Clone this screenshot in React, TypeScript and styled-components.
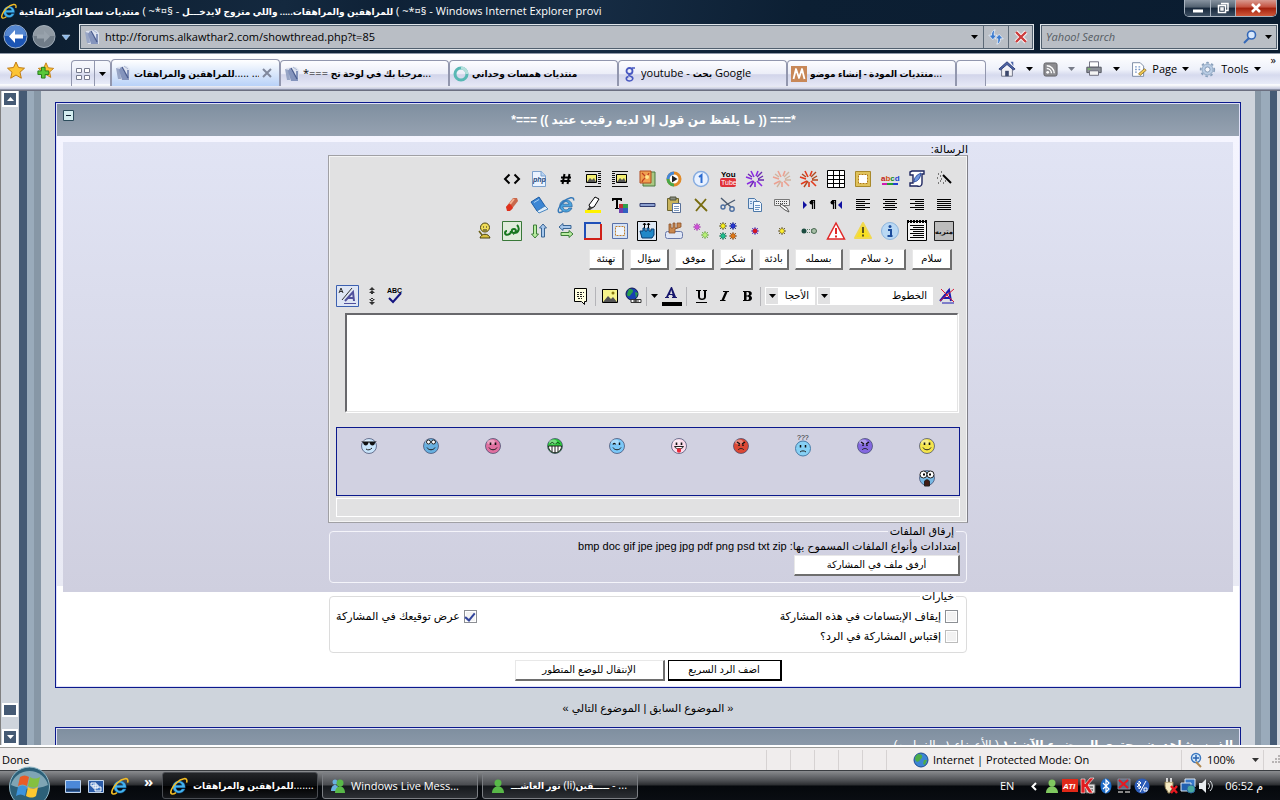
import React from 'react';
import styled, { createGlobalStyle } from 'styled-components';

const GlobalStyle = createGlobalStyle`
  * { box-sizing: border-box; }
  html, body, #root { height: 100%; }
  body { margin: 0; overflow: hidden; background: #ced4dc; }
  button, input, select, textarea { font: inherit; margin: 0; }
  button { cursor: pointer; }
  a { color: inherit; text-decoration: none; }
  svg { display: block; flex: none; direction: ltr; overflow: visible; }
`;

const uiFont = '"Open Sans", "DejaVu Sans", sans-serif';
const pageFont = '"Liberation Sans", "DejaVu Sans", sans-serif';

/* ---------- window frame ---------- */

const Window = styled.div`
  display: flex;
  flex-direction: column;
  height: 100vh;
  font: 11px/16px ${uiFont};
  color: #000;
`;

const Frame = styled.header`
  background: linear-gradient(100deg, #0b1c2e 0%, #14293f 22%, #0e2136 30%, #172d45 44%, #0c1f33 62%, #0a1c30 100%);
`;

const TitleBar = styled.div`
  display: flex;
  align-items: center;
  height: 22px;
  padding-left: 1px;
  gap: 2px;
  color: #fff;
  white-space: nowrap;
`;

const TitleText = styled.h1`
  flex: 1;
  margin: 0;
  font-size: 11px;
  line-height: 18px;
  font-weight: 400;
  overflow: hidden;
`;

const ArabicStrong = styled.bdi`
  font-weight: 700;
  font-size: 9px;
`;

const WindowButtons = styled.div`
  display: flex;
  align-self: flex-start;
  height: 17px;
  margin-right: 3px;
  border: 1px solid #a9b4c0;
  border-top: 0;
  border-radius: 0 0 5px 5px;
  overflow: hidden;
`;

const WindowButton = styled.button<{ $close?: boolean }>`
  display: grid;
  place-items: center;
  width: ${p => (p.$close ? 41 : 25)}px;
  padding: 0;
  border: 0;
  background: ${p =>
    p.$close
      ? 'linear-gradient(#d99a90, #c4503e 45%, #a11f0c 50%, #d0583a)'
      : 'linear-gradient(#8793a0, #51606f 45%, #15263a 50%, #3e5063)'};
  & + & { border-left: 1px solid #a9b4c0; }
`;

const NavBar = styled.nav`
  display: flex;
  align-items: center;
  height: 31px;
  padding: 0 2px 2px 3px;
`;

const RoundButton = styled.button`
  padding: 0;
  border: 0;
  background: none;
`;

const AddressBar = styled.form`
  display: flex;
  flex: 1;
  align-items: center;
  height: 26px;
  margin-left: 9px;
  padding-left: 4px;
  border: 1px solid #dfe5ea;
  outline: 1px solid #51606f;
  outline-offset: -2px;
  background: #b9bec5;
`;

const AddressInput = styled.input`
  flex: 1;
  min-width: 0;
  height: 22px;
  padding: 0 5px;
  border: 0;
  outline: 0;
  background: none;
`;

const BarButton = styled.button<{ $divided?: boolean }>`
  display: grid;
  place-items: center;
  align-self: stretch;
  width: ${p => (p.$divided ? 25 : 18)}px;
  padding: 0;
  border: 0;
  border-left: ${p => (p.$divided ? '1px solid #5d6a77' : '0')};
  background: none;
`;

const SearchBar = styled(AddressBar)`
  flex: 0 0 238px;
  margin-left: 6px;
  padding-left: 0;
`;

const SearchInput = styled(AddressInput)`
  font-style: italic;
  &::placeholder { color: #565c63; opacity: 1; }
`;

const TabBar = styled.div`
  display: flex;
  align-items: flex-end;
  height: 37px;
  padding: 0 4px 3px 6px;
  border-top: 1px solid #8e98a8;
  border-bottom: 1px solid #8d93a8;
  background: linear-gradient(#ffffff, #eef1fa 45%, #d6daee 60%, #e8ebf8 85%, #ffffff 88%, #c3c7dc);
`;

const Favorites = styled.div`
  display: flex;
  align-items: center;
  gap: 11px;
  width: 65px;
  height: 32px;
`;

const PlainButton = styled.button`
  display: flex;
  align-items: center;
  gap: 3px;
  padding: 0;
  border: 0;
  background: none;
`;

const QuickTabs = styled.div`
  display: flex;
  height: 26px;
  border: 1px solid #9297ae;
  border-bottom: 0;
  border-radius: 4px 4px 0 0;
  button { justify-content: center; width: 15px; }
  button:first-child { width: 23px; border-right: 1px solid #9297ae; }
`;

const Tab = styled.a<{ $active?: boolean }>`
  display: flex;
  flex: 0 1 169px;
  min-width: 0;
  align-items: center;
  gap: 3px;
  height: ${p => (p.$active ? 27 : 26)}px;
  padding: 0 7px 0 3px;
  border: 1px solid #9297ae;
  border-bottom: 0;
  border-radius: 4px 4px 0 0;
  background: ${p => (p.$active ? 'linear-gradient(#fff, #dbe8fb 50%, #b9d2f8)' : 'linear-gradient(#fdfdff, #eceef8 50%, #d2d5ea 55%, #e6e8f6)')};
  white-space: nowrap;
`;

const TabTitle = styled.span`
  flex: 1;
  min-width: 0;
  overflow: hidden;
`;

const NewTab = styled.button`
  width: 30px;
  height: 26px;
  border: 1px solid #9297ae;
  border-bottom: 0;
  border-radius: 4px 4px 0 0;
  background: linear-gradient(#fdfdff, #eceef8 50%, #d2d5ea 55%, #e6e8f6);
`;

const Commands = styled.div`
  display: flex;
  flex: 1;
  align-items: center;
  justify-content: flex-end;
  gap: 10px;
  height: 34px;
  button { gap: 5px; }
  button:nth-child(-n + 3) { gap: 10px; }
  button:last-child { align-self: flex-start; }
`;

/* ---------- page viewport ---------- */

const Viewport = styled.div`
  display: flex;
  flex: 1;
  min-height: 0;
  padding-right: 3px;
  border-top: 1px solid #6b6f80;
  border-left: 1px solid #808080;
  background: #ced4dc;
`;

const ScrollBar = styled.div`
  display: flex;
  flex-direction: column;
  width: 18px;
  padding: 0 2px 0 1px;
  background: #ced4dc;
`;

const ScrollPart = styled.button<{ $thumb?: boolean }>`
  display: grid;
  place-items: center;
  width: 16px;
  height: ${p => (p.$thumb ? 14 : 16)}px;
  padding: 0;
  border: 2px solid #fff;
  background: #455a74;
`;

const ScrollGap = styled.div<{ $fill?: boolean }>`
  flex: ${p => (p.$fill ? '1' : '0 0 12px')};
`;

const SideRail = styled.div<{ $right?: boolean }>`
  flex: 0 0 22px;
  background: ${p =>
    p.$right
      ? 'linear-gradient(90deg, #8797a6 0 6px, #9aabbb 6px 15px, #455a74 15px)'
      : 'linear-gradient(90deg, #455a74 0 8px, #9aabbb 8px 15px, #8797a6 15px)'};
`;

const Page = styled.main`
  flex: 1;
  min-width: 0;
  overflow: hidden;
  padding: 11px 14px 0;
  font: 11px/16px ${pageFont};
  direction: rtl;
`;

const Block = styled.section`
  border: 1px solid #0b198c;
  outline: 1px solid #dfe0f8;
  outline-offset: -2px;
  padding: 1px;
  background: #fff;
`;

const BlockHeader = styled.div`
  display: flex;
  align-items: center;
  height: 32px;
  padding: 0 6px;
  background: linear-gradient(#7f8fa0, #96a2b1);
  color: #fff;
`;

const BlockTitle = styled.h2`
  flex: 1;
  margin: 0;
  text-align: center;
  font-size: 12px;
  line-height: 20px;
`;

const ViewersTitle = styled.h2`
  margin: 0;
  font-size: 12px;
  line-height: 20px;
  span { font-weight: 400; }
`;

const Collapse = styled.button`
  align-self: flex-start;
  margin-top: 6px;
  padding: 0;
  border: 0;
  background: none;
`;

const Panel = styled.div`
  padding: 6px 6px 0;
  background: linear-gradient(#f5f5ff, #e9eaf4) top / 100% 450px no-repeat #fff;
`;

const PanelBody = styled.form`
  background: linear-gradient(#e1e4f4, #cfcfdf) top / 100% 450px no-repeat #fff;
  padding-bottom: 5px;
`;

const Column = styled.div`
  width: 640px;
  max-width: 100%;
  margin: 0 auto;
`;

const FieldLabel = styled.label`
  display: block;
  height: 13px;
  line-height: 15px;
`;

const Editor = styled.div`
  padding: 10px 7px 5px;
  border: 1px solid #a0a0a4;
  border-right-color: #808088;
  outline: 1px solid #f4f4f4;
  outline-offset: -2px;
  background: #e1e1e2;
`;

const IconRow = styled.div`
  display: flex;
  height: 26px;
  padding-right: 3px;
`;

const ToolButton = styled.button<{ $width?: number }>`
  display: grid;
  place-items: center;
  flex: 0 0 ${p => p.$width ?? 27}px;
  height: 26px;
  padding: 0;
  border: 0;
  background: none;
`;

const PhraseRow = styled.div`
  display: flex;
  gap: 6px;
  padding: 5px 8px 0;
`;

const RaisedButton = styled.button<{ $width: number; $primary?: boolean }>`
  width: ${p => p.$width}px;
  height: 21px;
  padding: 0;
  border: ${p => (p.$primary ? '1px solid #000' : '1px solid #e8e8e8')};
  border-right: 2px solid ${p => (p.$primary ? '#000' : '#6e6e6e')};
  border-bottom: 2px solid ${p => (p.$primary ? '#000' : '#6e6e6e')};
  background: #fff;
  color: #000;
  font-size: 10px;
  line-height: 16px;
  white-space: nowrap;
`;

const Toolbar = styled.div`
  display: flex;
  align-items: center;
  height: 26px;
  margin-top: 13px;
`;

const Spacer = styled.div`
  flex: 1;
`;

const Divider = styled.div`
  width: 1px;
  height: 19px;
  margin: 0 2px;
  background: #b4b4b8;
`;

const SelectBox = styled.label<{ $width: number }>`
  display: grid;
  grid-template-columns: 1fr 12px;
  align-items: center;
  justify-items: center;
  width: ${p => p.$width}px;
  height: 18px;
  margin-left: 2px;
  border: 1px solid #fff;
  background: #e1e1e2;
  select {
    grid-area: 1 / 1 / 2 / 3;
    width: 100%;
    height: 16px;
    padding: 0 5px 0 12px;
    border: 0;
    appearance: none;
    background: linear-gradient(#fff, #fff) right / calc(100% - 12px) 100% no-repeat transparent;
    font-size: 10px;
    line-height: 16px;
  }
  svg { grid-area: 1 / 2; pointer-events: none; }
`;

const Message = styled.textarea`
  display: block;
  width: calc(100% - 11px);
  height: 99px;
  margin: 4px 2px 0 9px;
  border: 1px solid #e4e4e4;
  border-top: 2px solid #68686c;
  border-left: 2px solid #68686c;
  background: #fff;
  box-shadow: 1px 1px #fff;
  outline: 0;
  resize: none;
`;

const Smilies = styled.div`
  display: grid;
  grid-template-columns: repeat(10, 62px);
  grid-auto-rows: 32px;
  justify-content: start;
  margin-top: 15px;
  padding: 2px 1px 1px;
  border: 1px solid #0b198c;
  background: #d1d1e1;
`;

const SmileyButton = styled.button`
  display: grid;
  place-items: center;
  padding: 0;
  border: 0;
  background: none;
`;

const Strip = styled.div`
  height: 19px;
  margin-top: 2px;
  border: 1px solid #fff;
`;

const Group = styled.fieldset<{ $light?: boolean }>`
  min-width: 0;
  margin: ${p => (p.$light ? 7 : 2)}px 1px 0;
  padding: 0 6px 6px;
  border: 1px solid ${p => (p.$light ? '#dcdcdc' : '#f4f4fa')};
  border-radius: 4px;
  legend { padding: 0 2px; margin-right: 4px; line-height: 13px; }
  p { margin: 0 0 1px; line-height: 16px; }
`;

const Options = styled.div`
  display: grid;
  grid-template-columns: 1fr auto;
  padding: 3px 2px 0 0;
`;

const Option = styled.label`
  display: flex;
  align-items: center;
  gap: 4px;
  height: 20px;
  input {
    appearance: none;
    display: grid;
    place-items: center;
    width: 13px;
    height: 13px;
    border: 1px solid #8c8f94;
    background: #f2f2f2;
    outline: 1px solid #fff;
    outline-offset: -2px;
  }
  input:disabled { border-color: #bcbcbc; }
  input:checked::after {
    content: '';
    width: 4px;
    height: 8px;
    border: solid #31449c;
    border-width: 0 2px 2px 0;
    transform: rotate(40deg);
  }
`;

const Actions = styled.div`
  display: flex;
  justify-content: center;
  gap: 3px;
  padding-top: 7px;
`;

const ThreadNav = styled.p`
  margin: 0;
  padding: 12px 0 11px;
  text-align: center;
`;

/* ---------- status bar and taskbar ---------- */

const StatusBar = styled.footer`
  display: flex;
  align-items: center;
  height: 25px;
  border-top: 2px solid #fff;
  background: #f0eded;
  box-shadow: inset 0 1px #9a9a98;
  padding: 2px 0 0 2px;
`;

const StatusCell = styled.span<{ $width: number; $inset?: boolean }>`
  display: flex;
  align-items: center;
  gap: 4px;
  width: ${p => p.$width}px;
  height: 20px;
  padding-left: ${p => (p.$inset ? 26 : 5)}px;
  border-left: 1px solid #d6d2d2;
  white-space: nowrap;
`;

const Taskbar = styled.nav`
  display: flex;
  align-items: center;
  height: 30px;
  border-top: 1px solid #3a3d41;
  background: linear-gradient(#8a8c8f, #4a4c50 10px, #2b2d30 14px, #05080c 15px, #0a0d12);
  color: #fff;
  padding: 0 17px 0 8px;
`;

const StartButton = styled.button`
  align-self: flex-end;
  width: 43px;
  height: 34px;
  padding: 0;
  border: 0;
  background: none;
  z-index: 1;
  overflow: hidden;
`;

const QuickLaunch = styled.div`
  display: flex;
  align-items: center;
  gap: 7px;
  width: 111px;
  padding-left: 14px;
  span { margin: -10px 0 0 8px; font-size: 15px; font-weight: 700; }
`;

const Task = styled.button<{ $active?: boolean }>`
  display: flex;
  align-items: center;
  gap: 5px;
  flex: 0 1 156px;
  min-width: 0;
  height: 27px;
  margin-right: 4px;
  padding: 0 7px;
  border: 1px solid ${p => (p.$active ? '#4a4d52' : '#7b7e83')};
  border-radius: 3px;
  background: ${p => (p.$active ? 'linear-gradient(#232528, #0c0e11 50%, #000 52%, #15171b)' : 'linear-gradient(#7d7f83, #4a4c50 48%, #15181c 52%, #2c2f34)')};
  color: #fff;
  white-space: nowrap;
  overflow: hidden;
`;

const Tray = styled.div`
  display: flex;
  flex: 1;
  align-items: center;
  justify-content: flex-end;
  gap: 2px;
  span:first-child { margin-right: 10px; }
  time { margin-left: 9px; }
`;

const TrayGap = styled.i`
  width: 8px;
`;

/* ---------- drawings ---------- */

const Svg = ({ s = 20, v = 20, children }: { s?: number; v?: number; children: React.ReactNode }) => (
  <svg width={s} height={s} viewBox={`0 0 ${v} ${v}`} fill="none" aria-hidden="true">{children}</svg>
);

const Caret = ({ color = '#000', up = false }: { color?: string; up?: boolean }) => (
  <svg width="7" height="4" viewBox="0 0 7 4" aria-hidden="true">
    <path d={up ? 'M0 4h7L3.5 0z' : 'M0 0h7L3.5 4z'} fill={color} />
  </svg>
);

const IeLogo = ({ s = 16 }: { s?: number }) => (
  <Svg s={s} v={16}>
    <path d="M13.5 9.5H5.2c.2 3.3 4.5 3.6 5.3 1.2h2.8C11 16.5 2.3 15 2.500 8.500 2.700 2 13.800 1.300 13.500 9.500zM5.300 7.300h5.300C10.300 4.300 5.600 4.300 5.300 7.300z" fill="#45b4ee" stroke="#146cb6" strokeWidth=".4" />
    <path d="M14.800 5C16.500-.5 10 1 5.500 5.300 1.500 9.300-.5 14 1.500 15c1 .4 2.600-.3 3.800-1.200" stroke="#f3bd25" strokeWidth="1.400" />
  </Svg>
);

const IePage = () => (
  <Svg s={18} v={16}>
    <path d="M13.500 9.500H5.200c.2 3.300 4.500 3.600 5.300 1.200h2.800C11 16.500 2.300 15 2.500 8.500 2.700 2 13.800 1.300 13.500 9.500zM5.300 7.300h5.300C10.300 4.300 5.600 4.300 5.300 7.300z" fill="#4ca4dc" stroke="#1c5c9c" strokeWidth=".6" />
    <path d="M14.800 4C15.500 0 10 1 5.500 5.300 1.500 9.300 0 14 2 14.600c1 .2 2.300-.3 3.300-1" stroke="#3478b8" strokeWidth="1.300" />
  </Svg>
);

const PageIcon = () => (
  <Svg s={16} v={16}>
    <path d="M2 2l10-1 3 3v11H4z" fill="#dde3f0" />
    <path d="M1 3l2 11h3L5 4z" fill="#98a6c6" />
    <path d="M6 2l6 10V5h2v10H7L4 5z" fill="#8494bc" />
    <path d="M7 2l6 11" stroke="#4c5e90" strokeWidth="1.500" />
    <path d="M9 1l4 3" stroke="#aab6d0" />
  </Svg>
);

const Burst = ({ a, b }: { a: string; b: string }) => (
  <Svg>
    <path d="M9 8L6 2M11 7l2-5M7 10L1 8M8 12l-6 3M10 13v5M12 12l5 5" stroke={a} strokeWidth="1.600" />
    <path d="M13 10l5-3M13 11h6M9 12l-4 6M7 8L3 5M12 8l5-5" stroke={b} strokeWidth="1.400" />
  </Svg>
);

const Star = ({ x, y, c, o }: { x: number; y: number; c: string; o: string }) => (
  <g transform={`translate(${x} ${y})`}>
    <path d="M0-4V4M-4 0H4M-3-3L3 3M3-3L-3 3" stroke={o} strokeWidth=".8" />
    <circle r="2.400" fill={c} stroke={o} strokeWidth=".5" />
  </g>
);

const AlignLines = ({ x, w }: { x: number[]; w: number[] }) => (
  <Svg>
    {x.map((left, i) => <path key={i} d={`M${left} ${4.5 + i * 2}h${w[i]}`} stroke="#000" />)}
  </Svg>
);

const PictureLines = ({ x }: { x: number }) => (
  <Svg>
    <path d="M2 2.500h16M2 4.500h16M2 6.500h16M2 8.500h16M2 10.500h16M2 12.500h16M2 14.500h16M2 17.500h16" stroke="#111" />
    <path d={`M${x - 1} 4h13v11h-13z`} fill="#e1e1e2" />
    <path d={`M${x + 0.5} 5.500h10v8h-10z`} fill="#f3ef72" stroke="#000" />
    <path d={`M${x + 1} 13l3-4 2 2 2-2 2 4z`} fill="#555" />
  </Svg>
);

const icons: Record<string, React.ReactNode> = {
  wand: <Svg><path d="M9 6l8 8" stroke="#000" strokeWidth="2" /><path d="M4 5h1M3 9h1M7 10h1M4 14h1M9 14h1M11 12h1M7 3h1M6 12h1M6 7h1" stroke="#555" strokeWidth="1.500" /></Svg>,
  script: <Svg><path d="M5 2h12v3h-2v9c0 3-2 4-5 3H3v-3h3V6H3V3z" fill="#fff" stroke="#1d2660" strokeWidth="1.400" /><path d="M7 13c0-5 3-7 7-9-1 6-3 8-7 9z" fill="#6f96df" stroke="#2b4a9b" /></Svg>,
  abcd: <Svg><text x="1" y="12" fontFamily="Liberation Sans" fontSize="8" fontWeight="700"><tspan fill="#c01a1a">a</tspan><tspan fill="#d05010">b</tspan><tspan fill="#108a20">c</tspan><tspan fill="#2040d0">d</tspan></text><path d="M2 15h5" stroke="#d01ab0" strokeWidth="2" /><path d="M7 15h6" stroke="#20a030" strokeWidth="2" /><path d="M13 15h5" stroke="#2040d0" strokeWidth="2" /></Svg>,
  frame: <Svg><path d="M2.500 2.500h15v15h-15z" fill="#e0c25a" stroke="#a8892c" /><path d="M5.500 5.500h9v9h-9z" fill="#fff" stroke="#b07a10" strokeDasharray="2 1" /></Svg>,
  table: <Svg><path d="M1.500 1.500h17v17h-17zM1.500 6.500h17M1.500 10.500h17M1.500 14.500h17M7.500 1.500v17M13.500 1.500v17" fill="#fff" stroke="#000" /></Svg>,
  burstRed: <Burst a="#e23a1c" b="#b04a20" />,
  burstPale: <Burst a="#eca090" b="#d0b4a0" />,
  burstPurple: <Burst a="#8a2be0" b="#6a2ab0" />,
  youtube: <Svg><text x="3" y="8" fontFamily="Liberation Sans" fontSize="8" fontWeight="700" fill="#000">You</text><rect x="2" y="9" width="16" height="9" rx="2" fill="#e03038" /><text x="3" y="16" fontFamily="Liberation Sans" fontSize="7" fill="#fff">Tube</text></Svg>,
  one: <Svg><circle cx="10" cy="10" r="7.500" fill="#e8f1ff" stroke="#86ace0" strokeWidth="1.500" /><path d="M8 8l2.500-2v8" stroke="#2c6cd0" strokeWidth="2" /></Svg>,
  play: <Svg><circle cx="10" cy="10" r="6" fill="#fff" stroke="#e08a28" strokeWidth="3" /><path d="M4 10a6 6 0 0 1 6-6" stroke="#4287d8" strokeWidth="3" /><path d="M4 10a6 6 0 0 0 6 6" stroke="#48a848" strokeWidth="3" /><path d="M8 6.500v7l5.500-3.500z" fill="#222" /></Svg>,
  flash: <Svg><path d="M6 3h12v14H6z" fill="#aac884" stroke="#4b7a40" /><path d="M3 2h11v12H3z" fill="#f0a050" stroke="#b04a20" /><path d="M5 13c1-4 5-4 7-9M5 4l4 4" stroke="#c04020" strokeWidth="1.200" /><circle cx="10" cy="8" r="2" fill="#ffe58c" /></Svg>,
  picRight: <PictureLines x={6} />,
  picLeft: <PictureLines x={3} />,
  hash: <Svg><path d="M8.500 5l-2 10M13.500 5l-2 10M5 8.500h10M4.500 12h10" stroke="#000" strokeWidth="2" /></Svg>,
  php: <Svg><path d="M3.500 2.500h9l4 4v11h-13z" fill="#eaf3ff" stroke="#7ba0cc" /><path d="M12 2v5h5" fill="#b7d2f2" stroke="#7ba0cc" /><text x="4" y="13" fontFamily="Liberation Sans" fontSize="7" fontStyle="italic" fontWeight="700" fill="#24487c">php</text></Svg>,
  code: <Svg><path d="M7.500 5.500L3 10l4.500 4.500M12.500 5.500L17 10l-4.500 4.500" stroke="#000" strokeWidth="2" /></Svg>,

  justify: <AlignLines x={[3, 3, 3, 3, 3, 3]} w={[14, 14, 14, 14, 14, 14]} />,
  right: <AlignLines x={[3, 8, 3, 8, 3, 8]} w={[14, 9, 14, 9, 14, 9]} />,
  center: <AlignLines x={[3, 5, 3, 5, 3, 5]} w={[14, 10, 14, 10, 14, 10]} />,
  left: <AlignLines x={[3, 3, 3, 3, 3, 3]} w={[14, 9, 14, 9, 14, 9]} />,
  ltr: <Svg><path d="M16 6v8l-4-4z" fill="#1010a0" /><path d="M9.500 5v9M7.500 5v9M6 5.500h4" stroke="#000" strokeWidth="1.200" /><circle cx="6.500" cy="7.500" r="2" fill="#000" /></Svg>,
  rtl: <Svg><path d="M4 6v8l4-4z" fill="#1010a0" /><path d="M15.500 5v9M13.500 5v9M12 5.500h4" stroke="#000" strokeWidth="1.200" /><circle cx="12.500" cy="7.500" r="2" fill="#000" /></Svg>,
  keyboard: <Svg><path d="M2.500 4.500h15v6h-15z" fill="#eee" stroke="#777" /><path d="M4 6.500h12M4 8.500h12" stroke="#444" strokeDasharray="1 1" /><path d="M9 9l6 4 2 4-4-2-5-4z" fill="#fff" stroke="#555" /></Svg>,
  copy: <Svg><path d="M3.500 3.500h6l2 2v8h-8z" fill="#dce9fb" stroke="#4c78a8" /><path d="M8.500 6.500h6l2 2v8h-8z" fill="#f4f9ff" stroke="#4c78a8" /><path d="M10 10.500h5M10 12.500h5M10 14.500h4M5 6.500h2M5 8.500h2" stroke="#6c94c4" /></Svg>,
  cut: <Svg><path d="M3 3l10 9M17 5L6 11" stroke="#4a5a70" strokeWidth="1.400" /><circle cx="14" cy="14" r="2.200" stroke="#4a6da0" strokeWidth="1.400" /><circle cx="5" cy="12" r="2" stroke="#4a6da0" strokeWidth="1.400" /></Svg>,
  remove: <Svg><path d="M4 4l12 12M15 4L5 16" stroke="#786c10" strokeWidth="1.800" /></Svg>,
  paste: <Svg><path d="M3.500 3.500h11v12h-11z" fill="#c9b45c" stroke="#6c6430" /><path d="M6 2h6v3H6z" fill="#888c80" stroke="#50523c" /><path d="M8.500 8.500h8v9h-8z" fill="#fff" stroke="#587098" /><path d="M10 11.500h5M10 13.500h5M10 15.500h5" stroke="#7c98bc" /></Svg>,
  rule: <Svg><path d="M3 8.500h15v3H3z" fill="#8ca0d0" stroke="#303c70" /></Svg>,
  textColor: <Svg><path d="M2 3h10v3h-1l-1-1H8v8h1v1H5v-1h1V5H4L3 6H2z" fill="#000" /><path d="M9 9h4v4H9z" fill="#c03030" /><path d="M13 9h5v4h-5z" fill="#30a050" /><path d="M9 13h4v5H9z" fill="#7040b0" /><path d="M13 13h5v5h-5z" fill="#3060c0" /></Svg>,
  highlight: <Svg><path d="M2 15h16v3H2z" fill="#fff200" /><path d="M7 13l-1-3 6-8 4 2-5 8z" fill="#fff" stroke="#000" /><path d="M4 15l3-4 3 2-3 2z" fill="#444" /></Svg>,
  ie: <IePage />,
  book: <Svg><path d="M2 7l8-5 6 9-8 5z" fill="#3c86d4" stroke="#1c5ca4" /><path d="M8 16l8-5 3 3-9 4z" fill="#dcecfa" stroke="#4a86c0" /><path d="M5 7.500l5-3" stroke="#a8d0f4" /></Svg>,
  eraser: <Svg><path d="M6 15l-2-3 7-9h4l1 3-7 9z" fill="#c8684c" /><path d="M4 12l4-4 3 5-3 3H5z" fill="#e0301c" /><path d="M12 4l-4 5" stroke="#f4b090" strokeWidth="2" /></Svg>,

  word: <Svg s={22} v={22}><path d="M1.500 1.500h19v19h-19z" fill="#bcbcbc" stroke="#222" /><text x="11" y="14" textAnchor="middle" fontFamily="DejaVu Sans" fontSize="7" fontWeight="700" fill="#111">متريه</text></Svg>,
  ruled: <Svg s={22} v={22}><path d="M1.500 1.500h19v19h-19z" fill="#f4f4f4" stroke="#000" /><path d="M1 1.500h20" stroke="#000" strokeWidth="3" strokeDasharray="2 1" /><path d="M4 5.500h14M7 7.500h11M4 9.500h14M7 11.500h11M4 13.500h14M7 15.500h11M4 17.500h14" stroke="#000" /></Svg>,
  info: <Svg><circle cx="10" cy="10" r="8.500" fill="#b9d8f4" stroke="#8cb4dc" /><path d="M8 9h3v6M7.500 15h5" stroke="#1c4c9c" strokeWidth="2" /><circle cx="10" cy="5.500" r="1.500" fill="#1c4c9c" /></Svg>,
  warn: <Svg><path d="M10 2l8 15H2z" fill="#f8e020" stroke="#f0d850" strokeWidth="2" strokeLinejoin="round" /><path d="M10 6v6M10 13.500v2" stroke="#5c5420" strokeWidth="2" /></Svg>,
  alert: <Svg><path d="M10 2l8.500 16h-17z" fill="#fff" stroke="#e02828" strokeWidth="1.500" /><path d="M10 7v6M10 14.500v2" stroke="#e02828" strokeWidth="2" /></Svg>,
  dots: <Svg><circle cx="5" cy="10" r="2.500" fill="#1c4c40" /><circle cx="15" cy="10" r="2.500" fill="#a8c0a8" stroke="#486850" /><path d="M8 8.500h5M8 11.500h5" stroke="#5c8068" strokeDasharray="1 1" /></Svg>,
  starYellow: <Svg><Star x={10} y={10} c="#fff030" o="#504010" /></Svg>,
  starRed: <Svg><Star x={10} y={10} c="#e01818" o="#4028c0" /></Svg>,
  fourStars: <Svg><Star x={5} y={5} c="#f8f020" o="#504810" /><Star x={15} y={5} c="#2838d0" o="#101c80" /><Star x={5} y={15} c="#20c090" o="#086048" /><Star x={15} y={15} c="#e07818" o="#804008" /></Svg>,
  twoStars: <Svg><Star x={6} y={6} c="#d050d8" o="#a040a8" /><Star x={14} y={14} c="#b8f078" o="#60a038" /></Svg>,
  stamp: <Svg><rect x="1.500" y="10.500" width="17" height="7" rx="2" fill="#dfe6f6" stroke="#6878a8" /><path d="M5 12V3h2v4h2V2h2v5h2V2h4v4l-6 2v4z" fill="#c88850" stroke="#8c5028" strokeWidth=".8" /></Svg>,
  hand: <Svg s={22} v={22}><path d="M1.500 1.500h19v19h-19z" fill="#dfe9f4" stroke="#000" /><path d="M4 11h3V8h2v3h2V8h2v3h2V9h3v6l-2 3H6z" fill="#2088c8" stroke="#083c70" /><path d="M8.500 8V3M12.500 8V3M7 5l1.500-2L10 5M11 5l1.500-2L14 5" stroke="#000" /></Svg>,
  dashed: <Svg><path d="M2.500 2.500h15v15h-15z" fill="#d4e2f6" stroke="#5870a8" /><path d="M5.500 5.500h9v9h-9z" fill="#eef4fc" stroke="#c08030" strokeDasharray="2 1" /></Svg>,
  square: <Svg><path d="M2 18V2H18" stroke="#2050b8" strokeWidth="2" /><path d="M1 18h17V3" stroke="#d02018" strokeWidth="2" /></Svg>,
  swapH: <Svg><path d="M3 6l4-3.500v2h8v3H7v2z" fill="#a8c8ec" stroke="#386494" /><path d="M17 13l-4-3.500v2H5v3h8v2z" fill="#b8eca0" stroke="#3c7c38" /></Svg>,
  swapV: <Svg><path d="M6 17l-3.500-4h2V4h3v9h2z" fill="#b8eca0" stroke="#3c7c38" /><path d="M14 3l-3.500 4h2v9h3V7h2z" fill="#a8c8ec" stroke="#386494" /></Svg>,
  script2: <Svg s={22} v={22}><path d="M1.500 1.500h19v19h-19z" fill="#e0ecdc" stroke="#387838" /><path d="M16 5c3 3 2 8-3 8-3 0-3-4 0-4s2 4-1 5M10 11c0 4-6 5-6 2 0-1 1-2 2-2" stroke="#187820" strokeWidth="2" /></Svg>,
  man: <Svg><circle cx="10" cy="6.500" r="4.500" fill="#f0dc58" stroke="#4c4410" /><path d="M8 6h1M11 6h1M8 9h4" stroke="#222" /><path d="M5 17c1-5 9-5 10 0z" fill="#d8c040" stroke="#4c4410" /><path d="M4 10l3 4" stroke="#6c6018" strokeWidth="1.500" /></Svg>,

  clearFormat: <Svg><path d="M3 15L12 4l2 11M6 12h8" stroke="#1a1ab0" strokeWidth="2" /><path d="M4 3l13 13M17 3L3 15" stroke="#d81838" /><path d="M5 17h12" stroke="#1a1ab0" /></Svg>,
  bold: <Svg><path fillRule="evenodd" d="M6 5h6c3.500 0 3.500 4 1.200 4.700C16 10.500 15.500 15 12 15H6v-1h1V6H6zM9.500 6v3.500h1c2 0 2-3.500 0-3.500zM9.500 10.500V14h1c2 0 2-3.500 0-3.500z" fill="#000" /></Svg>,
  italic: <Svg><path d="M9 5h6v1h-1.500L10 14h1.500v1H6v-1h1.500L11 6H9z" fill="#000" /></Svg>,
  underline: <Svg><path d="M5 4h5v1H9v6c0 2 4 2 4 0V5h-1V4h4v1h-1v6c0 4-8 4-8 0V5H5zM5 16h11v1H5z" fill="#000" /></Svg>,
  fontColor: <Svg s={22} v={22}><path fillRule="evenodd" d="M10 2h1l4 10h1v1h-5v-1h1l-1-2H8l-1 2h1v1H4v-1h1zM9 9h2.500L10.200 5z" fill="#16166c" /><path d="M1 17h20v4H1z" fill="#000" /></Svg>,
  globe: <Svg><circle cx="9" cy="8" r="6" fill="#1840b0" stroke="#101850" /><path d="M6 3c4 0 5 2 3 4s-2 4-4 3 0-4 1-7zM12 6l3 1-2 5z" fill="#28a048" /><path d="M8 13.500h5v3H8zM12 13.500h6v3h-6zM10 15h6" fill="#fff" stroke="#333" /></Svg>,
  image: <Svg><path d="M2.500 3.500h15v13h-15z" fill="#f6f48c" stroke="#000" /><path d="M3 16l5-6 3 3 2-2 4 5z" fill="#555" /><circle cx="13" cy="7" r="1.500" fill="#887810" /></Svg>,
  quote: <Svg><path d="M4.500 2.500h12v13h-2v3l-3-3h-7z" fill="#ffffe0" stroke="#000" /><path d="M7 6.500h7M7 8.500h6M7 10.500h7M8 12.500h4" stroke="#222" strokeDasharray="2 1" /></Svg>,
  spell: <Svg><text x="2" y="7" fontFamily="Liberation Sans" fontSize="7" fontWeight="700" fill="#000">ABC</text><path d="M4 12l4 4 8-9" stroke="#141480" strokeWidth="2" /></Svg>,
  resize: <Svg><path d="M10 1l3 3H7zM10 4l3 3H7zM10 19l3-3H7zM10 16l3-3H7zM9 6h2v2H9zM9 12h2v2H9z" fill="#333" /></Svg>,
  mode: <Svg s={24} v={24}><path d="M.5 1.500h22v21H.5z" fill="#dfe6f4" stroke="#3c60b0" /><path d="M3 9l2-5 2 5M4 7.500h3M6 16L16 4" stroke="#333" /><path d="M9 17l8-9 1 9M12 14h6" stroke="#50509c" strokeWidth="2" /><path d="M8 19.500h12" stroke="#50509c" /></Svg>,
};

type FaceProps = { c: string; eyes?: React.ReactNode; mouth: string; open?: string; extra?: React.ReactNode };
const Face = ({ c, eyes, mouth, open = 'none', extra }: FaceProps) => (
  <Svg s={22} v={22}>
    <circle cx="11" cy="11" r="7.500" fill={c} stroke="#3c4468" strokeOpacity=".7" />
    <ellipse cx="9" cy="7" rx="4" ry="2.500" fill="#fff" fillOpacity=".35" />
    {eyes ?? <path d="M8.500 7.500v2.500M13.500 7.500v2.500" stroke="#111" strokeWidth="1.600" />}
    <path d={mouth} stroke="#222" fill={open} />
    {extra}
  </Svg>
);

const smile = 'M7 12.500c1.500 3 6.500 3 8 0';
const frown = 'M8 15c1.500-2 4.500-2 6 0';
const angryEyes = <path d="M7 7l3 2M15 7l-3 2M9 9.500v1.500M13 9.500v1.500" stroke="#111" strokeWidth="1.400" />;

const smilies: [string, React.ReactNode][] = [
  ['smile', <Face c="#f4e44c" mouth={smile} />],
  ['sad', <Face c="#8468e0" mouth={frown} eyes={angryEyes} />],
  ['confused', <Svg s={24} v={24}><text x="6" y="6" fontFamily="Liberation Sans" fontSize="7" fill="#222">???</text><circle cx="12" cy="14.500" r="7.500" fill="#86d0f4" stroke="#487ca8" /><path d="M9.500 11v2.500M14.500 11v2.500" stroke="#111" strokeWidth="1.500" /><path d="M9 18c1.500-1.500 4.500-1.500 6 0" stroke="#222" /></Svg>],
  ['mad', <Face c="#dc4834" mouth={frown} eyes={angryEyes} />],
  ['tongue', <Face c="#fbdcec" mouth="M6.500 11.500h9c-1 3-8 3-9 0z" open="#fff" extra={<path d="M9 13.500h4v3c-1 1.500-3 1.500-4 0z" fill="#e82838" />} />],
  ['wink', <Face c="#7cc8f8" mouth={smile} eyes={<path d="M7 9.500c.5-1.500 2-1.500 2.500 0M13.500 7.500v2.500" stroke="#111" strokeWidth="1.400" />} />],
  ['grin', <Face c="#2cc83c" mouth="M4.500 11h13c0 9-13 9-13 0z" open="#fff" eyes={<path d="M6.500 9c.5-2 3-2 3.500 0M12 9c.5-2 3-2 3.500 0" stroke="#083c10" />} extra={<path d="M8 11v6M11 11v7M14 11v6" stroke="#222" />} />],
  ['blush', <Face c="#e070a0" mouth={smile} />],
  ['rolleyes', <Face c="#68b0e0" mouth={smile} eyes={<><circle cx="8.500" cy="7" r="2" fill="#fff" stroke="#222" /><circle cx="13.500" cy="7" r="2" fill="#fff" stroke="#222" /></>} />],
  ['cool', <Face c="#c8e4fa" mouth="M8 14c2 1.500 4 1 6-1" eyes={<path d="M3 6.500h16l-2 1c0 4-5 4-5.500 0h-1c-.5 4-5 4-5.500 0z" fill="#111" />} />],
  ['shocked', <Face c="#78b8e4" mouth="M8.500 19v-4c0-3 5-3 5 0v4z" open="#421c14" eyes={<><circle cx="7.500" cy="7.500" r="3.500" fill="#fff" stroke="#222" /><circle cx="14.500" cy="7.500" r="3.500" fill="#fff" stroke="#222" /><path d="M7 7.500h2M13 7.500h2" stroke="#000" strokeWidth="2" /></>} />],
];

const row1 = ['wand', 'script', 'abcd', 'frame', 'table', 'burstRed', 'burstPale', 'burstPurple', 'youtube', 'one', 'play', 'flash', 'picRight', 'picLeft', 'hash', 'php', 'code'];
const row2 = ['justify', 'right', 'center', 'left', 'ltr', 'rtl', 'keyboard', 'copy', 'cut', 'remove', 'paste', 'rule', 'textColor', 'highlight', 'ie', 'book', 'eraser'];
const row3 = ['word', 'ruled', 'info', 'warn', 'alert', 'dots', 'starYellow', 'starRed', 'fourStars', 'twoStars', 'stamp', 'hand', 'dashed', 'square', 'swapH', 'swapV', 'script2', 'man'];
const phrases: [string, number][] = [['سلام', 40], ['رد سلام', 57], ['بسمله', 48], ['بادئة', 30], ['شكر', 33], ['موفق', 39], ['سؤال', 39], ['تهنئة', 35]];

const Tool = ({ name, width }: { name: string; width?: number }) => (
  <ToolButton type="button" aria-label={name} $width={width}>{icons[name]}</ToolButton>
);

const FavStar = ({ plus = false }: { plus?: boolean }) => (
  <Svg s={plus ? 18 : 20}>
    <path d="M10 2l2.500 5.500 6 .7-4.500 4 1.300 6L10 15l-5.300 3.200 1.300-6-4.500-4 6-.7z" fill="#fcc434" stroke="#c07c14" />
    {plus && <path d="M5 7h4v4h4v4H9v4H5v-4H1v-4h4z" fill="#58c838" stroke="#207818" />}
  </Svg>
);

const Messenger = ({ c = '#58b848', second }: { c?: string; second?: string }) => (
  <Svg s={16} v={16}>
    {second && <><circle cx="5" cy="4" r="2.500" fill={second} /><path d="M1 13c0-8 8-8 8 0z" fill={second} /></>}
    <circle cx={second ? 10 : 8} cy="5" r="3.500" fill={c} />
    <path d={second ? 'M5 15c0-9 10-9 10 0z' : 'M2 15c0-9 12-9 12 0z'} fill={c} />
  </Svg>
);

export default function App() {
  return (
    <>
      <GlobalStyle />
      <Window>
        <Frame>
          <TitleBar>
            <IeLogo />
            <TitleText>
              <ArabicStrong>منتديات سما الكوثر الثقافية</ArabicStrong> ( ~*¤§ -{' '}
              <ArabicStrong>للمراهقين والمراهقات..... واللي متزوج لايدخـــل</ArabicStrong> ( ~*¤§ - Windows Internet Explorer provi
            </TitleText>
            <WindowButtons>
              <WindowButton aria-label="Minimize"><Svg s={14} v={14}><path d="M2 8.500h10v3H2z" fill="#fff" /></Svg></WindowButton>
              <WindowButton aria-label="Restore"><Svg s={14} v={14}><path d="M5 2.500h7v7h-2M2.500 4.500h7v7h-7zM5 7h2v2H5z" stroke="#fff" strokeWidth="1.500" /></Svg></WindowButton>
              <WindowButton $close aria-label="Close"><Svg s={14} v={14}><path d="M3 3l8 8M11 3l-8 8" stroke="#fff" strokeWidth="2.600" /></Svg></WindowButton>
            </WindowButtons>
          </TitleBar>
          <NavBar>
            <RoundButton aria-label="Back"><Svg s={25} v={25}><circle cx="12.500" cy="12.500" r="11.500" fill="#1c55b4" stroke="#9cb0c8" /><path d="M2 12a10.500 10.500 0 0 1 21 0z" fill="#7ca8e4" fillOpacity=".6" /><path d="M12 6l-6 6.500 6 6.500v-4.500h8v-4h-8z" fill="#fff" /></Svg></RoundButton>
            <RoundButton aria-label="Forward"><svg width="30" height="25" viewBox="0 0 30 25" aria-hidden="true"><circle cx="16" cy="12.500" r="11" fill="#707c88" stroke="#a0acb8" /><path d="M5.500 12a10.500 10.500 0 0 1 21 0z" fill="#b0b8c0" fillOpacity=".5" /><path d="M16 6.500l6 6-6 6v-4H9v-4h7z" fill="#98a2ac" /></svg></RoundButton>
            <RoundButton aria-label="Recent pages"><Svg s={12} v={12}><path d="M4 4h8L8 9z" fill="#8cb8e8" stroke="#d0e0f0" strokeWidth=".5" /></Svg></RoundButton>
            <AddressBar>
              <PageIcon />
              <AddressInput aria-label="Address" defaultValue="http://forums.alkawthar2.com/showthread.php?t=85" />
              <BarButton type="button" aria-label="Address list"><Caret /></BarButton>
              <BarButton type="button" $divided aria-label="Refresh"><Svg s={18}><path d="M5 8C5 5 6 3 9 2c-1 2-1 4-1 6h3l-4.500 5L2 8z" fill="#3c7cd0" stroke="#fff" strokeWidth=".8" /><path d="M15 12c0 3-1 5-4 6 1-2 1-4 1-6H9l4.500-5 4.500 5z" fill="#3c7cd0" stroke="#fff" strokeWidth=".8" /></Svg></BarButton>
              <BarButton type="button" $divided aria-label="Stop"><Svg s={16} v={16}><path d="M3 3l10 10M13 3L3 13" stroke="#fff" strokeWidth="4" /><path d="M3 3l10 10M13 3L3 13" stroke="#cc3c3c" strokeWidth="2.400" /></Svg></BarButton>
            </AddressBar>
            <SearchBar>
              <SearchInput aria-label="Search" placeholder="Yahoo! Search" />
              <BarButton type="button" aria-label="Search"><Svg s={16} v={16}><circle cx="9.500" cy="6" r="4" fill="#d8e8fc" stroke="#3468b8" strokeWidth="1.600" /><path d="M7 9l-5 5" stroke="#3468b8" strokeWidth="2" /></Svg></BarButton>
              <BarButton type="button" aria-label="Search options"><Caret /></BarButton>
            </SearchBar>
          </NavBar>
          <TabBar>
            <Favorites>
              <PlainButton aria-label="Favorites"><FavStar /></PlainButton>
              <PlainButton aria-label="Add favorite"><FavStar plus /></PlainButton>
            </Favorites>
            <QuickTabs>
              <PlainButton aria-label="Quick tabs"><Svg s={16} v={16}><path d="M1.500 2.500h5v4h-5zM9.500 2.500h5v4h-5zM1.500 9.500h5v4h-5zM9.500 9.500h5v4h-5z" fill="#fff" stroke="#777c90" /></Svg></PlainButton>
              <PlainButton aria-label="Tab list"><Caret /></PlainButton>
            </QuickTabs>
            <Tab href="#t1" $active>
              <PageIcon />
              <TabTitle><ArabicStrong>للمراهقين والمراهقات</ArabicStrong>..... ...</TabTitle>
              <Svg s={10} v={10}><path d="M1 1l8 8M9 1L1 9" stroke="#80889c" strokeWidth="2" /></Svg>
            </Tab>
            <Tab href="#t2"><PageIcon /><TabTitle>*=== <ArabicStrong>مرحبا بك في لوحة تح</ArabicStrong>...</TabTitle></Tab>
            <Tab href="#t3"><Svg s={16} v={16}><circle cx="8" cy="8" r="6" stroke="#58b8b4" strokeWidth="3" /><path d="M8 2a6 6 0 0 1 6 6" stroke="#b4e0dc" strokeWidth="3" /></Svg><TabTitle><ArabicStrong>منتديات همسات وحداني</ArabicStrong></TabTitle></Tab>
            <Tab href="#t4"><Svg s={16} v={16}><circle cx="7.500" cy="5" r="3" stroke="#4858c0" strokeWidth="1.800" /><path d="M10 2h3M8 8c-2 1-1 2 1 2.500 3 1 2 4.500-1.500 4.500s-4.500-3.500-1-4.500" stroke="#4858c0" strokeWidth="1.600" /></Svg><TabTitle>youtube - <ArabicStrong>بحث</ArabicStrong> Google</TabTitle></Tab>
            <Tab href="#t5"><Svg s={16} v={16}><path d="M0 0h16v16H0z" fill="#c88858" /><path d="M2.500 13L5 3l3 9 3-9 2.500 10" stroke="#fff" strokeWidth="1.800" strokeLinejoin="round" /></Svg><TabTitle><ArabicStrong>منتديات المودة - إنشاء موضو</ArabicStrong>...</TabTitle></Tab>
            <NewTab aria-label="New tab" />
            <Commands>
              <PlainButton aria-label="Home"><Svg s={18}><path d="M4 9v9h12V9" fill="#f0f0f4" stroke="#666c80" /><path d="M1 10l9-8 9 8-2 1-7-6-7 6z" fill="#4c64a8" stroke="#2c3c74" /><path d="M8 12h4v6H8z" fill="#3c486c" /><path d="M14 2h3v5z" fill="#4c64a8" /></Svg><Caret /></PlainButton>
              <PlainButton aria-label="Feeds"><Svg s={15} v={16}><rect x="1" y="1" width="14" height="14" rx="2" fill="#8c8c90" stroke="#606064" /><circle cx="5" cy="11" r="1.500" fill="#fff" /><path d="M4 7a5 5 0 0 1 5 5M4 4a8 8 0 0 1 8 8" stroke="#fff" strokeWidth="1.500" /></Svg><Caret color="#777c88" /></PlainButton>
              <PlainButton aria-label="Print"><Svg s={18}><path d="M5 2h10v6H5z" fill="#fff" stroke="#667" /><path d="M2 8h16v6H2z" fill="#8c9098" stroke="#50545c" /><path d="M5 12h10v5H5z" fill="#f4f4f4" stroke="#667" /><path d="M3 10h3" stroke="#6c4" /></Svg><Caret /></PlainButton>
              <PlainButton><Svg s={17}><path d="M3 2h9l4 4v12H3z" fill="#fff" stroke="#6c7c98" /><path d="M6 7h2M10 7h2M6 10h2M10 10h2M6 13h2" stroke="#7898c8" strokeWidth="1.500" /><path d="M10 15l7-6 2 2-7 6z" fill="#f0c850" stroke="#8c7028" /></Svg>Page<Caret /></PlainButton>
              <PlainButton><Svg s={17}><circle cx="10" cy="10" r="6.500" fill="#b8cce4" stroke="#88a0bc" /><circle cx="10" cy="10" r="8" stroke="#88a0bc" strokeWidth="2" strokeDasharray="3 3" /><circle cx="10" cy="10" r="3" fill="#f4f6fc" stroke="#7890ac" /></Svg>Tools<Caret /></PlainButton>
              <PlainButton aria-label="More">»</PlainButton>
            </Commands>
          </TabBar>
        </Frame>

        <Viewport>
          <ScrollBar>
            <ScrollPart aria-label="Scroll up"><Caret color="#fff" up /></ScrollPart>
            <ScrollGap $fill />
            <ScrollPart $thumb aria-label="Scroll position" />
            <ScrollGap />
            <ScrollPart aria-label="Scroll down"><Caret color="#fff" /></ScrollPart>
          </ScrollBar>
          <SideRail />
          <Page lang="ar">
            <Block>
              <BlockHeader>
                <BlockTitle>*=== (( ما يلفظ من قول إلا لديه رقيب عتيد )) ===*</BlockTitle>
                <Collapse aria-label="Collapse"><Svg s={11} v={11}><path d="M.5.500h10v10H.5z" fill="#d4eef0" stroke="#2c4c5c" /><path d="M3 5.500h5" stroke="#123" /></Svg></Collapse>
              </BlockHeader>
              <Panel>
                <PanelBody>
                  <Column>
                    <FieldLabel htmlFor="message">الرسالة:</FieldLabel>
                    <Editor>
                      {[row1, row2, row3].map((row, i) => (
                        <IconRow key={i}>{row.map(name => <Tool key={name} name={name} />)}</IconRow>
                      ))}
                      <PhraseRow>
                        {phrases.map(([text, width]) => <RaisedButton key={text} type="button" $width={width}>{text}</RaisedButton>)}
                      </PhraseRow>
                      <Toolbar>
                        <Tool name="clearFormat" />
                        <SelectBox $width={116}><select aria-label="الخطوط"><option>الخطوط</option></select><Caret /></SelectBox>
                        <SelectBox $width={50}><select aria-label="الأحجام"><option>الأحجا</option></select><Caret /></SelectBox>
                        <Divider />
                        <Tool name="bold" width={23} />
                        <Tool name="italic" width={23} />
                        <Tool name="underline" width={23} />
                        <Divider />
                        <Tool name="fontColor" width={24} />
                        <ToolButton type="button" aria-label="Text colours" $width={11}><Caret /></ToolButton>
                        <Divider />
                        <Tool name="globe" width={23} />
                        <Tool name="image" width={23} />
                        <Divider />
                        <Tool name="quote" width={26} />
                        <Spacer />
                        <Tool name="spell" width={23} />
                        <Tool name="resize" width={23} />
                        <Tool name="mode" width={24} />
                      </Toolbar>
                      <Message id="message" dir="ltr" />
                      <Smilies>
                        {smilies.map(([name, face]) => <SmileyButton key={name} type="button" aria-label={name}>{face}</SmileyButton>)}
                      </Smilies>
                      <Strip />
                    </Editor>
                    <Group>
                      <legend>إرفاق الملفات</legend>
                      <p>إمتدادات وأنواع الملفات المسموح بها: <bdi>bmp doc gif jpe jpeg jpg pdf png psd txt zip</bdi></p>
                      <RaisedButton type="button" $width={166}>أرفق ملف في المشاركة</RaisedButton>
                    </Group>
                    <Group $light>
                      <legend>خيارات</legend>
                      <Options>
                        <Option><input type="checkbox" />إيقاف الإبتسامات في هذه المشاركة</Option>
                        <Option><input type="checkbox" defaultChecked />عرض توقيعك في المشاركة</Option>
                        <Option><input type="checkbox" disabled />إقتباس المشاركة في الرد؟</Option>
                      </Options>
                    </Group>
                    <Actions>
                      <RaisedButton type="submit" $width={114} $primary>اضف الرد السريع</RaisedButton>
                      <RaisedButton type="button" $width={150}>الإنتقال للوضع المتطور</RaisedButton>
                    </Actions>
                  </Column>
                </PanelBody>
              </Panel>
            </Block>
            <ThreadNav>« <a href="#prev">الموضوع السابق</a> | <a href="#next">الموضوع التالي</a> »</ThreadNav>
            <Block>
              <BlockHeader><ViewersTitle>الذين يشاهدون محتوى الموضوع الآن : ١ <span>( الأعضاء ١ والزوار ٠)</span></ViewersTitle></BlockHeader>
            </Block>
          </Page>
          <SideRail $right />
        </Viewport>

        <StatusBar>
          <span>Done</span>
          <Spacer />
          {[1, 2, 3, 4, 5].map(n => <StatusCell key={n} $width={24} />)}
          <StatusCell $width={295} $inset>
            <Svg s={16} v={16}><circle cx="8" cy="8" r="7" fill="#3c84d4" stroke="#1c4c90" /><path d="M5 2c5 0 5 3 3 5s-3 4-5 2-1-5 2-7zM11 8l3 0-2 5-2-1z" fill="#4cac48" /></Svg>
            Internet | Protected Mode: On
          </StatusCell>
          <StatusCell $width={82}>
            <Svg s={16} v={16}><circle cx="9" cy="6" r="4.500" fill="#d8ecfc" stroke="#3c78c0" strokeWidth="1.500" /><path d="M6 6h6M9 3v6" stroke="#2c64b0" strokeWidth="1.500" /><path d="M9 10l5 5" stroke="#b08850" strokeWidth="2" /></Svg>
            100%
            <Spacer />
            <Caret color="#333" />
            <span />
          </StatusCell>
          <StatusCell $width={17}><Svg s={12} v={12}><path d="M9 2h2M6 5h5M3 8h8" stroke="#b8b4b4" strokeWidth="2" strokeDasharray="2 1" /></Svg></StatusCell>
        </StatusBar>

        <Taskbar>
          <StartButton aria-label="Start">
            <svg width="43" height="34" viewBox="0 0 43 34" aria-hidden="true">
              <circle cx="21.500" cy="21" r="20" fill="#2c6078" stroke="#90b8c8" />
              <path d="M3 19a19 18 0 0 1 37 0c-12 5-25 5-37 0z" fill="#b8d4dc" fillOpacity=".6" />
              <path d="M12 11c3-2 6-2 9 0l-2 9c-3-2-6-2-9 0z" fill="#e85c28" />
              <path d="M22 11c3 2 6 2 10 0l-2 9c-3 2-6 2-10 0z" fill="#84c040" />
              <path d="M10 21c3-2 6-2 9 0l-2 9c-3-2-6-2-9 0z" fill="#3c94dc" />
              <path d="M20 21c3 2 6 2 10 0l-2 9c-3 2-6 2-10 0z" fill="#fcc830" />
            </svg>
          </StartButton>
          <QuickLaunch>
            <Svg s={16} v={16}><path d="M.5 2.500h15v12H.5z" fill="#4c88d8" stroke="#c0d4ec" /><path d="M1 12h14" stroke="#20406c" strokeWidth="3" /></Svg>
            <Svg s={16} v={16}><path d="M.5 2.500h15v12H.5z" fill="#2c5ca8" stroke="#c0d4ec" /><path d="M3 5h5v3H3zM5 7h5v3H5zM7 9h6v4H7z" fill="#4c80c8" stroke="#fff" /></Svg>
            <IeLogo s={18} />
            <span>»</span>
          </QuickLaunch>
          <Task $active><IeLogo s={18} /><span><ArabicStrong>للمراهقين والمراهقات</ArabicStrong>.......</span></Task>
          <Task><Messenger second="#68b0e0" />Windows Live Mess...</Task>
          <Task><Messenger /><span><ArabicStrong>نور العاشـــ</ArabicStrong> (li)<ArabicStrong>ـــــقين</ArabicStrong> - ...</span></Task>
          <Tray>
            <span>EN</span>
            <Svg s={16} v={16}><path d="M10 5L6.500 8.500 10 12" stroke="#fff" strokeWidth="2" /></Svg>
            <Messenger c="#80c860" />
            <Svg s={16} v={16}><path d="M0 1h16v13H0z" fill="#e02818" /><text x="1" y="11" fontFamily="Liberation Sans" fontSize="8" fontStyle="italic" fontWeight="700" fill="#fff">ATI</text></Svg>
            <Svg s={16} v={16}><path d="M6 6h9v9H6z" fill="#ddd" stroke="#555" /><path d="M8 9h5M8 12h5" stroke="#333" /><path d="M1 1h4v5l5-6h4L8 7l5 8H9L5 9v6H1z" fill="#e01c20" stroke="#fff" strokeWidth=".6" /></Svg>
            <Svg s={16} v={16}><ellipse cx="8" cy="8" rx="5.500" ry="7.500" fill="#1c6cc8" /><path d="M5 5l6 6-3 3V2l3 3-6 6" stroke="#fff" strokeWidth="1.200" /></Svg>
            <Svg s={16} v={16}><path d="M2 1h12v10H2z" fill="#587088" stroke="#889" /><path d="M3 2l9 8M12 2l-9 8" stroke="#e81820" strokeWidth="2" /><path d="M2 14h5M9 14h5" stroke="#888" strokeWidth="2" /></Svg>
            <Svg s={16} v={16}><circle cx="8" cy="8" r="7.500" fill="#2c5cb8" /><path d="M3 5l4 4-2 2V3l2 2-4 4M12 3L6 14M10 10h3v3h-3z" stroke="#fff" /></Svg>
            <TrayGap />
            <Svg s={16} v={16}><path d="M3 4h8v4c0 4-3 4-3 7H6c0-3-3-3-3-7z" fill="#f4e8c0" stroke="#887850" /><path d="M5 4V0M9 4V0" stroke="#fff" strokeWidth="1.500" /><path d="M9 8l6 7M15 8l-6 7" stroke="#e81820" strokeWidth="2.400" /></Svg>
            <Svg s={16} v={16}><path d="M5 1h10v8H5z" fill="#3878c8" stroke="#dde8f4" /><path d="M1 5h10v8H1z" fill="#2060b0" stroke="#dde8f4" /><circle cx="11" cy="11" r="4" fill="#48a8a0" stroke="#2c68a0" /></Svg>
            <Svg s={16} v={16}><path d="M1 5h3l4-4v14l-4-4H1z" fill="#e8ecf0" /><path d="M10 5c2 2 2 4 0 6M12 3c3 3 3 7 0 10" stroke="#e8ecf0" /></Svg>
            <time>06:52 <bdi>م</bdi></time>
          </Tray>
        </Taskbar>
      </Window>
    </>
  );
}
